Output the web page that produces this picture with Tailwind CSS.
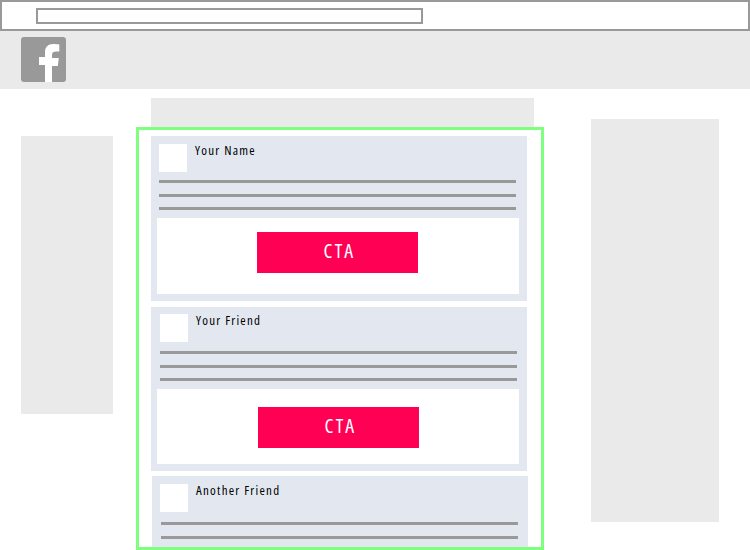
<!DOCTYPE html>
<html>

<head>
    <meta charset="utf-8">
    <title>Facebook feed wireframe</title>
    <script src="https://cdn.jsdelivr.net/npm/@tailwindcss/browser@4"></script>
</head>

<body class="w-[750px] h-[550px] overflow-hidden bg-white font-['Open_Sans','Noto_Sans',sans-serif]">
    <!-- browser bar -->
    <div class="h-[31px] border-2 border-[#999] pl-[34px] pt-[6px]">
        <div class="w-[387px] h-[16px] border-2 border-[#999]"></div>
    </div>

    <!-- fb header -->
    <div class="h-[58px] bg-[#eaeaea] pl-[21px] pt-[6px]">
        <svg class="w-[45px] h-[45px]" viewBox="0 0 45 45">
            <rect width="45" height="45" rx="3" fill="#999" />
            <path d="M24 45V28h-6v-8h6v-5c0-5 3-8 8-8 2.500 0 5 .3 6.300.4v7h-3c-3 0-4.300 1-4.300 3.600v3h6.800l-1 8H31v17z" fill="#fff" />
        </svg>
    </div>

    <div class="flex">
        <!-- left column -->
        <div class="w-[92px] h-[278px] ml-[21px] mt-[47px] bg-[#eaeaea]"></div>

        <!-- feed -->
        <div class="w-[408px] ml-[23px]">
            <div class="w-[383px] h-[29px] ml-[15px] mt-[9px] bg-[#eaeaea]"></div>
            <div class="h-[423px] border-3 border-[#7fff7f] overflow-hidden pl-[12px] pt-[6px]">

                <div class="w-[376px] h-[165px] bg-[#e3e8f0] pt-[8px]">
                    <div class="flex pl-[8px] gap-[8px]">
                        <div class="w-[28px] h-[28px] bg-white"></div>
                        <p class="text-[13px] leading-[12px] tracking-[1.25px] text-black font-medium [font-stretch:75%]">Your Name</p>
                    </div>
                    <div class="flex flex-col w-[357px] ml-[8px] mt-[8px]">
                        <div class="h-[3px] bg-[#999]"></div>
                        <div class="h-[3px] bg-[#999] mt-[11px]"></div>
                        <div class="h-[3px] bg-[#999] mt-[10px]"></div>
                    </div>
                    <div class="w-[362px] h-[76px] ml-[6px] mt-[8px] bg-white pt-[14px] pl-[100px]">
                        <div class="w-[161px] h-[41px] pb-[4px] pl-[4px] bg-[#ff0055] flex items-center justify-center text-white text-[20px] tracking-[2.2px] [font-stretch:75%]">CTA</div>
                    </div>
                </div>

                <div class="w-[376px] h-[164px] mt-[6px] bg-[#e3e8f0] pt-[7px]">
                    <div class="flex pl-[9px] gap-[8px]">
                        <div class="w-[28px] h-[28px] bg-white"></div>
                        <p class="text-[13px] leading-[12px] tracking-[1.25px] text-black font-medium [font-stretch:75%]">Your Friend</p>
                    </div>
                    <div class="flex flex-col w-[357px] ml-[9px] mt-[9px]">
                        <div class="h-[3px] bg-[#999]"></div>
                        <div class="h-[3px] bg-[#999] mt-[11px]"></div>
                        <div class="h-[3px] bg-[#999] mt-[10px]"></div>
                    </div>
                    <div class="w-[362px] h-[75px] ml-[6px] mt-[8px] bg-white pt-[18px] pl-[101px]">
                        <div class="w-[161px] h-[41px] pb-[4px] pl-[4px] bg-[#ff0055] flex items-center justify-center text-white text-[20px] tracking-[2.2px] [font-stretch:75%]">CTA</div>
                    </div>
                </div>

                <div class="w-[376px] h-[100px] mt-[5px] ml-[1px] bg-[#e3e8f0] pt-[8px]">
                    <div class="flex pl-[8px] gap-[8px]">
                        <div class="w-[28px] h-[28px] bg-white"></div>
                        <p class="text-[13px] leading-[12px] tracking-[1.25px] text-black font-medium [font-stretch:75%]">Another Friend</p>
                    </div>
                    <div class="flex flex-col w-[357px] ml-[9px] mt-[10px]">
                        <div class="h-[3px] bg-[#999]"></div>
                        <div class="h-[3px] bg-[#999] mt-[11px]"></div>
                    </div>
                </div>
            </div>
        </div>

        <!-- right column -->
        <div class="w-[128px] h-[403px] ml-[47px] mt-[30px] bg-[#eaeaea]"></div>
    </div>
</body>

</html>
